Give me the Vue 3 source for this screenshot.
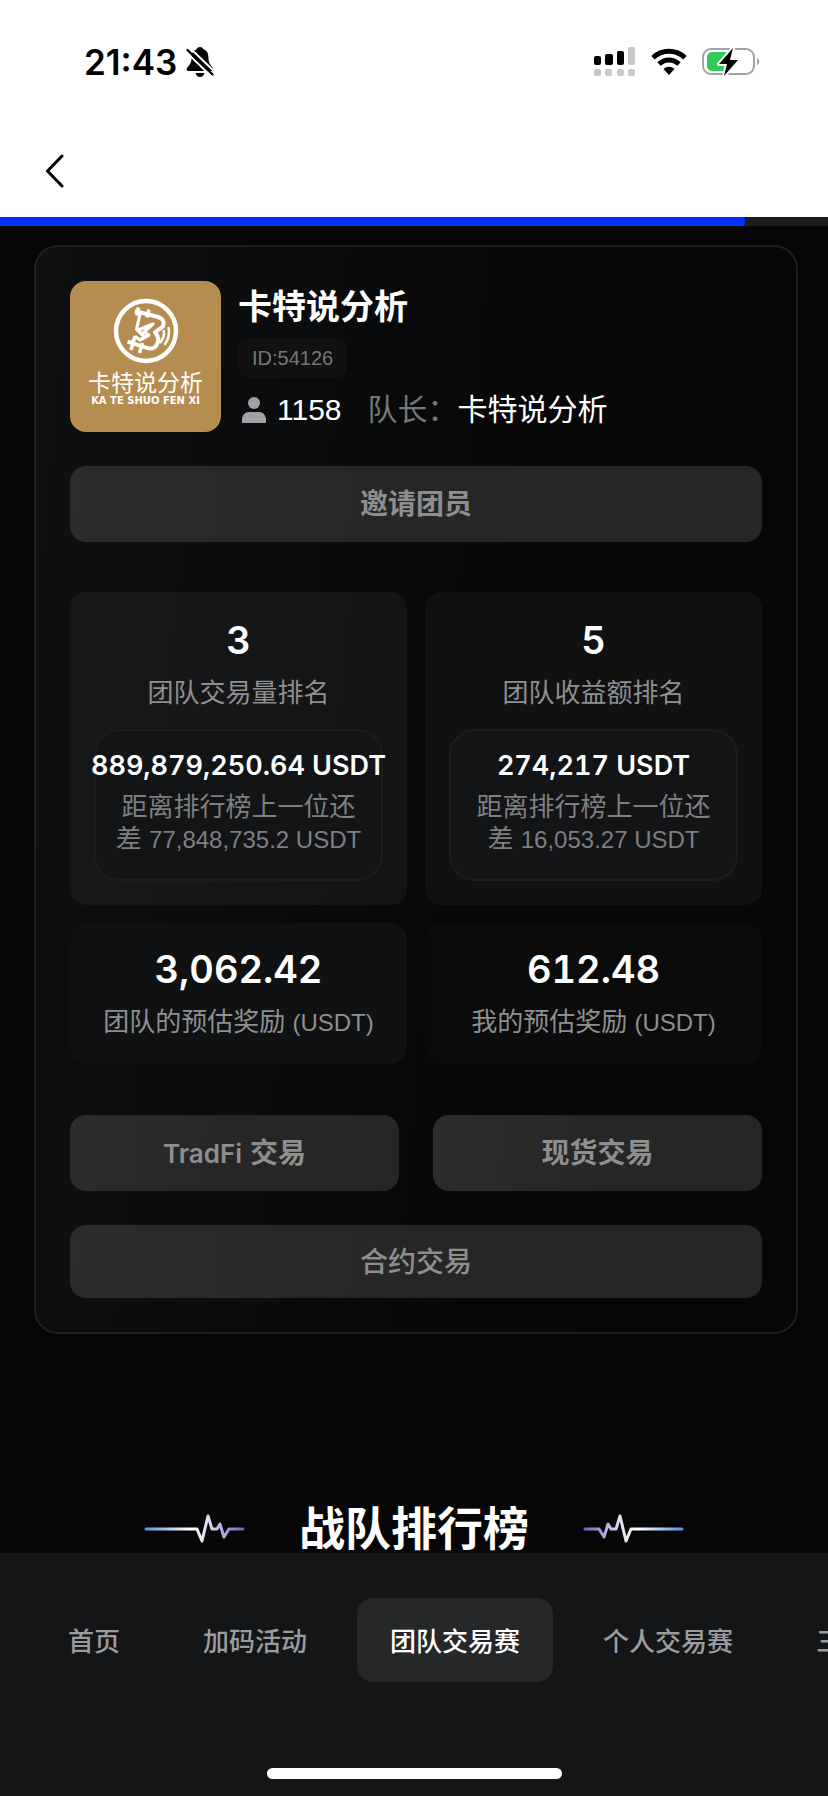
<template>
  <div class="app">
    <header class="top">
      <div class="status-bar">
        <div class="status-left">
          <span class="time">21:43</span>
          <svg class="bell" width="28" height="30" viewBox="0 0 28 30">
            <path d="M14 0c-1.800 0-3 1-3.400 2.200C7 3.400 5.600 6.500 5.600 10.500c0 6-2.500 7.500-4.500 10.500-1 1.600-.5 3 1.400 3h23c1.900 0 2.400-1.400 1.400-3-2-3-4.500-4.500-4.500-10.500 0-4-1.400-7.100-5-8.300C17 1 15.800 0 14 0z" />
            <path d="M9.500 26h9c-.6 2.400-2.300 4-4.500 4s-3.900-1.600-4.500-4z" />
            <path d="M-.5 4.500l27 26M3.500.5l25.500 24.500" stroke="#fff" stroke-width="2" />
            <path d="M1.500 3l25 24.500" stroke="#000" stroke-width="2.400" stroke-linecap="round" />
          </svg>
        </div>
        <div class="status-right">
          <svg width="42" height="30" viewBox="0 0 42 30">
            <rect x="0" y="9" width="7" height="9" rx="2" />
            <rect x="11" y="7" width="8" height="11" rx="2" />
            <rect x="23" y="4" width="7" height="14" rx="2" />
            <rect x="34" y="0" width="7" height="18" rx="2" fill="#c8c8c8" />
            <rect v-for="x in [0, 11, 23, 34]" :key="x" :x="x" y="22" width="7" height="7" rx="2" fill="#c8c8c8" />
          </svg>
          <svg width="36" height="28" viewBox="0 0 36 28" fill="none" stroke="#000" stroke-width="5">
            <path d="M2 9.800C11 1.200 25 1.200 34 9.800" />
            <path d="M8 16c6-5.500 14-5.500 20 0" />
            <path d="M12.500 21c3.200-3 7.800-3 11 0L18 27z" fill="#000" stroke="none" />
          </svg>
          <svg width="58" height="30" viewBox="0 0 58 30">
            <rect x="1" y="2" width="51" height="25" rx="8" fill="none" stroke="#a3a3a3" stroke-width="2" />
            <path d="M10 5h17v19H10a5 5 0 0 1-5-5v-9a5 5 0 0 1 5-5z" fill="#34c759" />
            <path d="M55 11c3 1 3 6 0 7z" fill="#a3a3a3" />
            <path d="M31 1L17 17h8l-3 12 14-16h-8z" stroke="#fff" stroke-width="4" stroke-linejoin="round" />
            <path d="M31 1L17 17h8l-3 12 14-16h-8z" />
          </svg>
        </div>
      </div>
      <div class="title-bar">
        <button class="back" aria-label="返回">
          <svg width="20" height="34" viewBox="0 0 20 34" fill="none" stroke="#000" stroke-width="3" stroke-linecap="round" stroke-linejoin="round">
            <path d="M17 2L2.500 17 17 32" />
          </svg>
        </button>
      </div>
    </header>
    <div class="progress">
      <div class="progress-value" :style="{ width: progress + '%' }"></div>
    </div>

    <main class="content">
      <section class="team-card">
        <div class="team-head">
          <div class="avatar">
            <svg width="66" height="66" viewBox="0 0 66 66" fill="none" stroke="#fff">
              <circle cx="33" cy="33" r="30" stroke-width="4.500" />
              <path d="M22 13l23.300 6q7.300 2.600 4.700 9.300l-8 6q5.300 6.300 2 12-2.700 5.300-8.700 4L14.600 43.600" stroke-width="4" stroke-linejoin="round" />
              <path d="M27 16l-3.400 15 8 8M25 32l15-6-9 8 5 3-9 5-4-3-4 5" stroke-width="3.200" stroke-linejoin="round" />
              <path d="M25.500 9.500l-2 8M36 11.500l-2 8M22 38l-4 14M29.500 45l-3 10" stroke-width="3.500" />
              <path d="M50.500 32q2 7-4 13M55.500 29q2 10-4 18" stroke-width="2.500" />
            </svg>
            <span class="avatar-name">卡特说分析</span>
            <span class="avatar-pinyin">KA TE SHUO FEN XI</span>
          </div>
          <div class="team-info">
            <h2>卡特说分析</h2>
            <span class="team-id">ID:54126</span>
            <div class="team-meta">
              <svg width="24" height="26" viewBox="0 0 24 26" fill="#a1a2a6">
                <circle cx="12" cy="6" r="6" />
                <path d="M0 26v-3c0-5 3-8 7-8h10c4 0 7 3 7 8v3z" />
              </svg>
              <span class="members">1158</span>
              <span class="leader-label">队长：</span>
              <span class="leader">卡特说分析</span>
            </div>
          </div>
        </div>

        <button class="btn">邀请团员</button>

        <div class="stats">
          <div v-for="r in ranks" :key="r.label" class="stat">
            <div class="stat-value">{{ r.rank }}</div>
            <div class="stat-label">{{ r.label }}</div>
            <div class="gap-box">
              <div class="amount">{{ r.amount }} USDT</div>
              <div class="gap-text">距离排行榜上一位还差 <span class="num">{{ r.gap }} USDT</span></div>
            </div>
          </div>
          <div v-for="r in rewards" :key="r.label" class="stat reward">
            <div class="stat-value">{{ r.value }}</div>
            <div class="stat-label">{{ r.label }} <span class="num">(USDT)</span></div>
          </div>
        </div>

        <div class="actions">
          <button class="btn"><span class="latin">TradFi</span> 交易</button>
          <button class="btn">现货交易</button>
          <button class="btn wide">合约交易</button>
        </div>
      </section>

      <div class="section-title">
        <svg width="102" height="30" viewBox="0 0 102 30">
          <defs>
            <linearGradient id="pulse-left" gradientUnits="userSpaceOnUse" x1="0" y1="0" x2="102" y2="0">
              <stop offset="0" stop-color="#4d8fe8" />
              <stop offset=".45" stop-color="#fff" />
              <stop offset=".65" stop-color="#ddd5f5" />
              <stop offset="1" stop-color="#6a55b8" />
            </linearGradient>
          </defs>
          <path class="pulse" d="M2 15h51l5 12 6-25 4 13h5l3-5 4 13 5-8h14" stroke="url(#pulse-left)" />
        </svg>
        <h1>战队排行榜</h1>
        <svg width="102" height="30" viewBox="0 0 102 30">
          <defs>
            <linearGradient id="pulse-right" gradientUnits="userSpaceOnUse" x1="102" y1="0" x2="0" y2="0">
              <stop offset="0" stop-color="#4d8fe8" />
              <stop offset=".45" stop-color="#fff" />
              <stop offset=".65" stop-color="#ddd5f5" />
              <stop offset="1" stop-color="#6a55b8" />
            </linearGradient>
          </defs>
          <path class="pulse" d="M100 15H49l-5 12-6-25-4 13h-5l-3-5-4 13-5-8H3" stroke="url(#pulse-right)" />
        </svg>
      </div>
    </main>

    <footer class="bottom">
      <nav class="tabs">
        <button
          v-for="tab in tabs"
          :key="tab"
          class="tab"
          :class="{ active: tab === current }"
          @click="current = tab"
        >{{ tab }}</button>
      </nav>
      <div class="home-bar"></div>
    </footer>
  </div>
</template>

<script setup>
import { ref } from 'vue'

const progress = 90

const ranks = [
  { rank: 3, label: '团队交易量排名', amount: '889,879,250.64', gap: '77,848,735.2' },
  { rank: 5, label: '团队收益额排名', amount: '274,217', gap: '16,053.27' }
]

const rewards = [
  { value: '3,062.42', label: '团队的预估奖励' },
  { value: '612.48', label: '我的预估奖励' }
]

const tabs = ['首页', '加码活动', '团队交易赛', '个人交易赛', '三']
const current = ref('团队交易赛')
</script>

<style>
body { background: #060606; }
</style>

<style scoped>
* { box-sizing: border-box; }
.app { display: flex; flex-direction: column; height: 100vh; overflow: hidden; background: #060606; color: #fff; font-family: "Liberation Sans", "Noto Sans CJK SC", sans-serif; }
button { border: none; background: none; padding: 0; color: inherit; font: inherit; cursor: pointer; white-space: nowrap; }
h1, h2 { margin: 0; }
svg { display: block; flex-shrink: 0; }

.top { flex-shrink: 0; background: #fff; color: #000; }
.status-bar { display: flex; justify-content: space-between; align-items: center; height: 124px; padding: 0 68px 0 84px; }
.status-left { display: flex; align-items: center; gap: 9px; }
.time { font-family: Inter, sans-serif; font-size: 35px; font-weight: 600; line-height: 40px; }
.bell { overflow: hidden; }
.status-right { display: flex; align-items: center; gap: 15px; }
.title-bar { display: flex; align-items: center; height: 93px; padding: 0 45px; }
.progress { flex-shrink: 0; height: 9px; background: #1d1d1e; }
.progress-value { height: 100%; background: #0431fb; border-radius: 0 2px 2px 0; }

.content { flex: 1; min-height: 0; overflow: hidden; padding: 19px 30px 0 34px; }
.team-card { padding: 34px; border: 2px solid #1e1f20; border-radius: 24px; background: linear-gradient(95deg, #0e1011 0%, #080809 55%, #070707 100%); }
.team-head { display: flex; gap: 17px; }
.avatar { display: flex; flex-direction: column; align-items: center; flex-shrink: 0; width: 151px; height: 151px; padding-top: 17px; border-radius: 16px; background: #b68d50; }
.avatar-name { margin-top: 6px; font-size: 23px; line-height: 26px; }
.avatar-pinyin { font-family: "DejaVu Sans", sans-serif; font-size: 10px; font-weight: 700; line-height: 10px; white-space: nowrap; }
.team-info { display: flex; flex-direction: column; align-items: flex-start; }
.team-info h2 { font-size: 34px; font-weight: 600; line-height: 52px; }
.team-id { height: 40px; margin-top: 5px; padding: 0 14px; border-radius: 10px; background: #111112; color: #76777a; font-size: 20px; line-height: 41px; }
.team-meta { display: flex; align-items: center; margin-top: 12px; padding-left: 4px; font-size: 30px; line-height: 40px; }
.members { margin-left: 11px; }
.leader-label { margin-left: 26px; color: #76777a; }

.btn { height: 76px; padding-bottom: 4px; border-radius: 16px; background: linear-gradient(95deg, #2b2c2d, #262626 50%); color: #8e8e8f; font-size: 28px; font-weight: 600; text-align: center; }
.team-card > .btn { display: block; width: 100%; margin-top: 34px; }
.latin { font-family: Inter, sans-serif; font-size: 26px; }

.stats { display: grid; grid-template-columns: repeat(2, minmax(0, 1fr)); gap: 18px; margin-top: 50px; }
.stat { padding: 24px; border-radius: 16px; background: linear-gradient(95deg, #161819, #131314); text-align: center; }
.stat:nth-child(even) { background: #111112; }
.stat-value { font-family: Inter, sans-serif; font-size: 38px; font-weight: 600; font-variant-numeric: tabular-nums; line-height: 48px; }
.stat-label { margin-top: 10px; color: #8e8f91; font-size: 26px; line-height: 38px; white-space: nowrap; }
.num { font-size: 24px; }
.gap-box { margin-top: 17px; padding: 18px 16px 23px; border: 2px solid #1b1c1e; border-radius: 26px; background: #121416; }
.amount { display: flex; justify-content: center; font-family: Inter, sans-serif; font-size: 27px; font-weight: 600; font-variant-numeric: tabular-nums; line-height: 34px; white-space: nowrap; }
.gap-text { margin-top: 8px; color: #7e7f82; font-size: 26px; line-height: 32px; }
.gap-text .num { white-space: nowrap; }
.stat.reward { padding: 22px 0; background: #0f1112; }
.stat.reward:nth-child(even) { background: #0b0b0c; }

.actions { display: grid; grid-template-columns: 1fr 1fr; gap: 34px; margin-top: 51px; }
.wide { grid-column: span 2; height: 73px; font-weight: 500; }

.section-title { display: flex; justify-content: center; align-items: center; gap: 53px; margin: 162px 0 0 -4px; }
.section-title h1 { font-size: 46px; font-weight: 600; line-height: 66px; white-space: nowrap; }
.pulse { fill: none; stroke-width: 3; stroke-linecap: round; stroke-linejoin: round; }

.bottom { display: flex; flex-direction: column; justify-content: space-between; align-items: center; flex-shrink: 0; height: 243px; padding: 45px 0 17px; background: #141517; }
.tabs { display: flex; gap: 17px; width: 100%; padding-left: 35px; overflow: hidden; }
.tab { flex-shrink: 0; height: 84px; padding: 0 33px 2px; border-radius: 16px; color: #9b9c9f; font-size: 26px; font-weight: 500; }
.tab.active { background: #262729; color: #fff; }
.home-bar { width: 295px; height: 11px; border-radius: 6px; background: #fff; }
</style>
